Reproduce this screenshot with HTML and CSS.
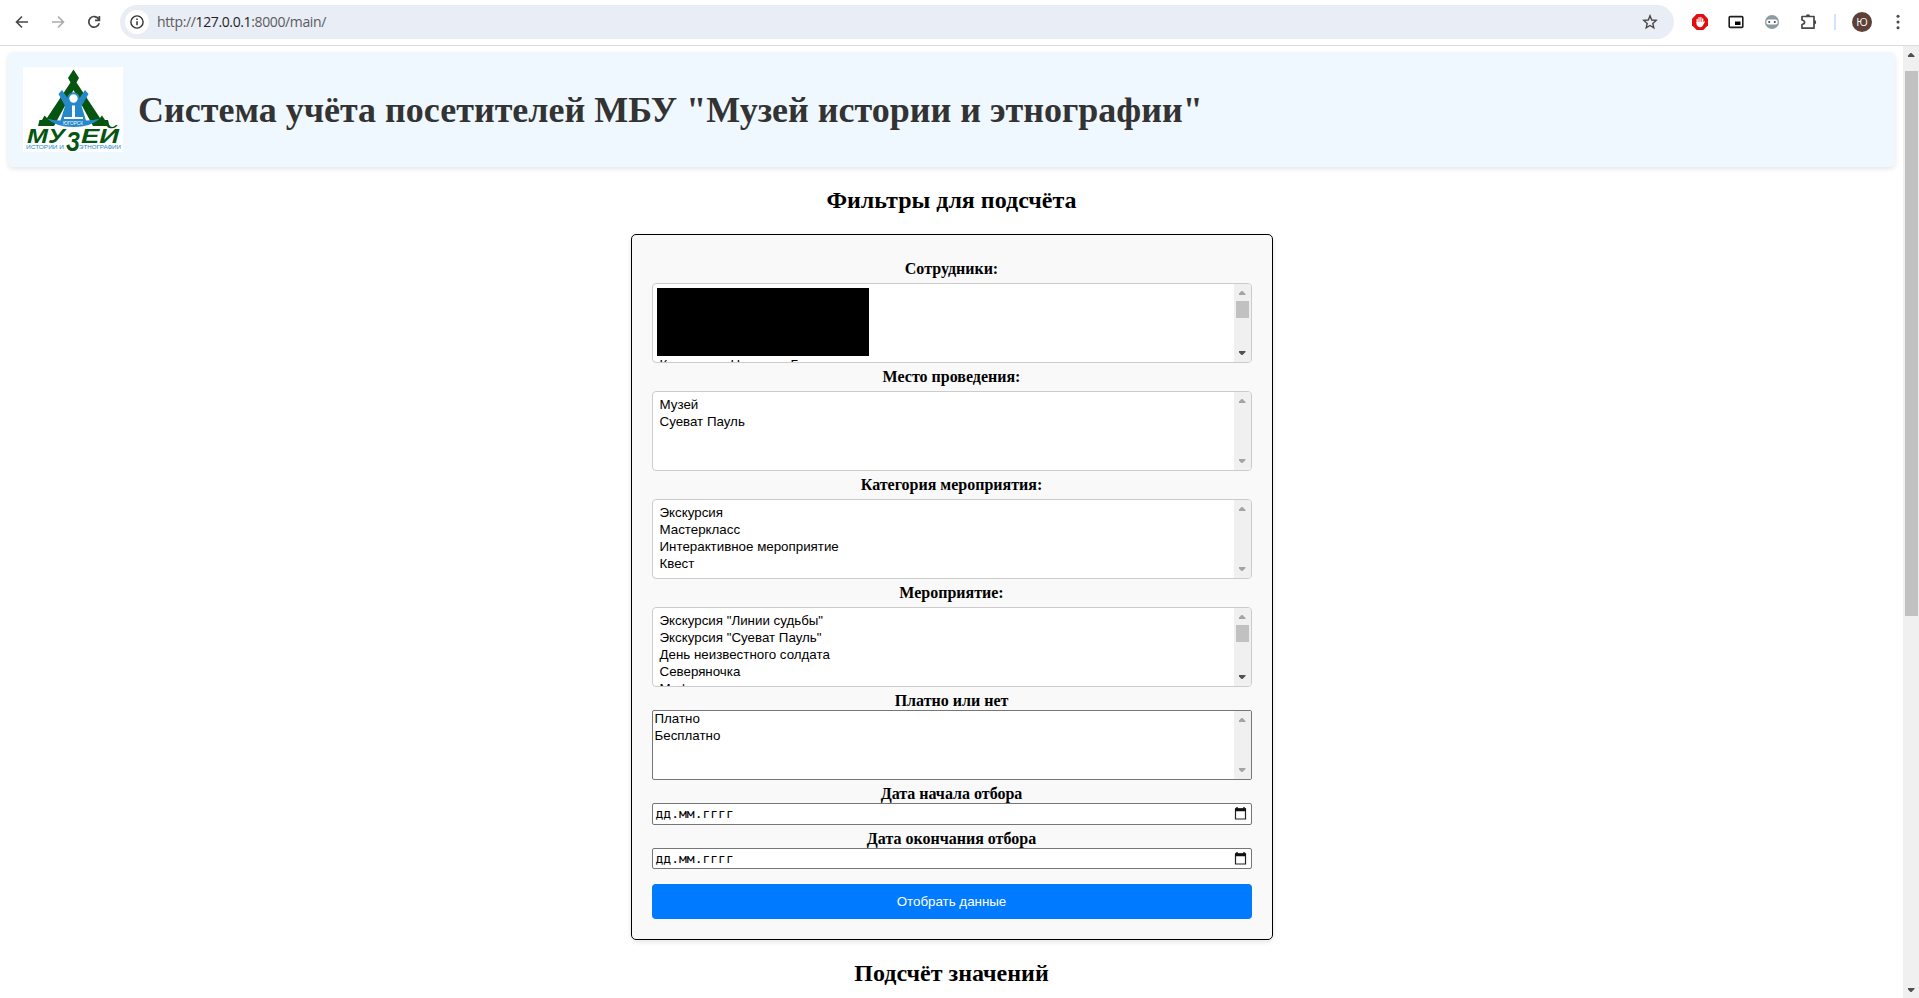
FILE: index.html
```html
<!DOCTYPE html>
<html lang="ru">
<head>
<meta charset="utf-8">
<title>Система учёта посетителей</title>
<link rel="stylesheet" href="styles.css">
</head>
<body>
<div class="toolbar">
  <svg class="nav-icon" viewBox="0 0 16 16"><path d="M14 8H3M8 2.5L2.5 8 8 13.500" fill="none" stroke="#474747" stroke-width="1.6"/></svg>
  <svg class="nav-icon" viewBox="0 0 16 16"><path d="M2 8h11M8 2.500L13.500 8 8 13.500" fill="none" stroke="#ababab" stroke-width="1.600"/></svg>
  <svg class="nav-icon" viewBox="0 0 16 16"><path d="M12.600 5A5.300 5.300 0 1 0 13.200 9.300M13.400 2v4.300H9" fill="none" stroke="#474747" stroke-width="1.700"/></svg>
  <div class="address">
    <span class="info"><svg width="14" height="14" viewBox="0 0 14 14"><circle cx="7" cy="7" r="6.100" fill="none" stroke="#333" stroke-width="1.400"/><path d="M7 6.200V10.300M7 3.500V5" stroke="#333" stroke-width="1.500"/></svg></span>
    <span class="url">http://<b>127.0.0.1</b>:8000/main/</span>
    <svg class="star" width="16" height="16" viewBox="0 0 16 16"><path d="M8 1.800L9.700 6l4.500.4-3.400 3 1 4.400L8 11.500l-3.800 2.300 1-4.400-3.400-3L6.300 6z" fill="none" stroke="#474747" stroke-width="1.400"/></svg>
  </div>
  <div class="extensions">
    <svg width="16" height="16" viewBox="0 0 16 16"><path d="M4.700 0h6.600L16 4.700v6.600L11.300 16H4.700L0 11.300V4.700z" fill="#e40d0d"/><path d="M5.200 9V5.500M7 8V3.700M8.900 8V3.500M10.700 9V5" stroke="#fff" stroke-width="1.300" stroke-linecap="round"/><path d="M4.500 8h6.800l1.300-.9q.6.500 0 1.300L10.600 12Q9.700 13.300 8 13.200 5.300 13 4.500 10.500z" fill="#fff"/></svg>
    <svg width="16" height="16" viewBox="0 0 16 16"><rect x="1.200" y="2.600" width="13.600" height="10.800" rx="1" fill="none" stroke="#1f1f1f" stroke-width="1.600"/><path d="M7 7.500h5.500V11H7z" fill="#000"/></svg>
    <svg width="16" height="16" viewBox="0 0 16 16"><circle cx="8" cy="8" r="7" fill="#8d9ca1"/><rect x="2.300" y="5.500" width="11.400" height="5" rx="2.500" fill="#fff"/><circle cx="5.200" cy="8" r="1" fill="#3c3c55"/><circle cx="10.800" cy="8" r="1" fill="#3c3c55"/></svg>
    <svg width="18" height="18" viewBox="0 0 18 18"><path d="M2 3.500h12v11.700H2v-3.700q2.600-.5 2.600-2.200T2 7z" fill="none" stroke="#474747" stroke-width="1.700" stroke-linejoin="round"/><path d="M5.800 3.500a2.200 2.200 0 0 1 4.400 0z M14 7a2.200 2.200 0 0 1 0 4.400z" fill="#474747"/></svg>
  </div>
  <span class="divider"></span>
  <span class="avatar">Ю</span>
  <svg class="dots" width="4" height="16" viewBox="0 0 4 16"><g fill="#474747"><circle cx="2" cy="2.300" r="1.500"/><circle cx="2" cy="8" r="1.500"/><circle cx="2" cy="13.700" r="1.500"/></g></svg>
</div>
<div class="viewport">
  <main class="page">
    <header class="banner">
      <svg class="logo" width="100" height="85" viewBox="0 0 100 85">
        <rect width="100" height="85" fill="#fff"/>
        <path d="M50.500 2.500L56 11l-2.500 4.500L77 51l2-2.500L82 53h3l1.500 6H70L50.500 23 31 59H15l1.500-6H19l2.500-4.500L24 51l23.500-35.500L45 11z" fill="#05540f"/>
        <path d="M35.500 27l3.500-4 7.500 11h8L62 23l3.500 4-7 12 4.500 14.500q8 0 14-2Q68 60 50.500 60T24 51.500q6 2 13.500 2L42 39z" fill="#2588c8"/>
        <circle cx="50.500" cy="31.500" r="5.200" fill="#fff" stroke="#2588c8" stroke-width="2"/>
        <path d="M49 38.500h3V50h8v2H41v-2h8z" fill="#fff"/>
        <text x="40" y="58" class="logo-small" textLength="20" lengthAdjust="spacingAndGlyphs" fill="#fff">ЮГОРСК</text>
        <text class="logo-word" x="4" y="76" textLength="38" lengthAdjust="spacingAndGlyphs">МУ</text>
        <text class="logo-z" x="43" y="83.500" textLength="14" lengthAdjust="spacingAndGlyphs">З</text>
        <text class="logo-word" x="58" y="76" textLength="38" lengthAdjust="spacingAndGlyphs">ЕЙ</text>
        <text class="logo-line" x="3" y="81.500" textLength="38" lengthAdjust="spacingAndGlyphs">ИСТОРИИ И</text>
        <text class="logo-line" x="56" y="81.500" textLength="42" lengthAdjust="spacingAndGlyphs">ЭТНОГРАФИИ</text>
      </svg>
      <h1>Система учёта посетителей МБУ "Музей истории и этнографии"</h1>
    </header>
    <h2>Фильтры для подсчёта</h2>
    <form class="filters">
      <label>Сотрудники:</label>
      <div class="list spaced">
        <div class="options"><div class="redacted"></div><p class="clipped"><span>К</span><span>Н</span><span>Г</span></p></div>
        <div class="scroll"><i class="up off"></i><i class="thumb"></i><i class="down"></i></div>
      </div>
      <label>Место проведения:</label>
      <div class="list spaced">
        <div class="options"><p>Музей</p><p>Суеват Пауль</p></div>
        <div class="scroll"><i class="up off"></i><i class="down off"></i></div>
      </div>
      <label>Категория мероприятия:</label>
      <div class="list spaced">
        <div class="options"><p>Экскурсия</p><p>Мастеркласс</p><p>Интерактивное мероприятие</p><p>Квест</p></div>
        <div class="scroll"><i class="up off"></i><i class="down off"></i></div>
      </div>
      <label>Мероприятие:</label>
      <div class="list spaced">
        <div class="options"><p>Экскурсия "Линии судьбы"</p><p>Экскурсия "Суеват Пауль"</p><p>День неизвестного солдата</p><p>Северяночка</p><p>Мифы</p></div>
        <div class="scroll"><i class="up off"></i><i class="thumb"></i><i class="down"></i></div>
      </div>
      <label>Платно или нет</label>
      <div class="list plain">
        <div class="options"><p>Платно</p><p>Бесплатно</p></div>
        <div class="scroll"><i class="up off"></i><i class="down off"></i></div>
      </div>
      <label>Дата начала отбора</label>
      <div class="date"><span>дд.мм.гггг</span><svg width="13" height="13" viewBox="0 0 13 13"><path d="M1.500 2h10v10H1.500z" fill="none" stroke="#222" stroke-width="1.200"/><path d="M1 1.300h11v3H1zM2.300 0h1.400v2H2.300zM9.300 0h1.400v2H9.300z" fill="#111"/></svg></div>
      <label>Дата окончания отбора</label>
      <div class="date second"><span>дд.мм.гггг</span><svg width="13" height="13" viewBox="0 0 13 13"><path d="M1.500 2h10v10H1.500z" fill="none" stroke="#222" stroke-width="1.200"/><path d="M1 1.300h11v3H1zM2.300 0h1.400v2H2.300zM9.300 0h1.400v2H9.300z" fill="#111"/></svg></div>
      <button type="button">Отобрать данные</button>
    </form>
    <h2>Подсчёт значений</h2>
  </main>
  <div class="scroll page-scroll"><i class="up"></i><i class="thumb"></i><i class="down"></i></div>
</div>
</body>
</html>
```
FILE: styles.css
```css
* { box-sizing: border-box; }
html, body { height: 100%; }
body {
  margin: 0;
  background: #fff;
  color: #000;
  font-family: "Liberation Serif", "Times New Roman", serif;
  overflow: hidden;
  display: flex;
  flex-direction: column;
}
svg { display: block; flex: none; }

/* browser toolbar */
.toolbar {
  flex: none;
  display: flex;
  align-items: center;
  height: 46px;
  padding: 0 4px 2px 14px;
  border-bottom: 1px solid #dcdcdc;
}
.nav-icon { width: 16px; height: 16px; margin-right: 20px; }
.nav-icon:nth-child(3) { margin-right: 18px; }
.address {
  display: flex;
  align-items: center;
  width: 1554px;
  height: 34px;
  padding: 0 16px 0 5px;
  border-radius: 17px;
  background: #e9edf6;
}
.info {
  display: grid;
  place-items: center;
  width: 24px;
  height: 24px;
  border-radius: 50%;
  background: #fff;
}
.url {
  flex: 1;
  margin-left: 8px;
  font: 14px "Open Sans", "Noto Sans", sans-serif;
  letter-spacing: -.37px;
  color: #5a5c60;
}
.url b { font-weight: 400; color: #1f1f1f; }
.extensions { display: flex; align-items: center; gap: 20px; margin-left: 18px; }
.divider { width: 2px; height: 16px; margin-left: 16px; background: #d3e3fd; }
.avatar {
  display: grid;
  place-items: center;
  width: 20px;
  height: 20px;
  margin-left: 16px;
  border-radius: 50%;
  background: #5d4037;
  color: #fff;
  font: 11px "Open Sans", sans-serif;
}
.dots { margin-left: 24px; }

/* page */
.viewport { flex: 1; min-height: 0; display: flex; }
.page { flex: 1; padding: 6px 8px 0; overflow: hidden; }
.banner {
  display: flex;
  align-items: center;
  height: 115px;
  padding: 15px;
  border-radius: 5px;
  background: #f0f8ff;
  box-shadow: 0 2px 5px rgba(0, 0, 0, .1);
}
h1 { margin: 2px 0 0 15px; font-size: 36px; line-height: 41px; color: #333; }
h2 { margin: 20px 0; font-size: 24px; line-height: 27px; text-align: center; }
.logo-small { font: 5px "Liberation Sans", sans-serif; }
.logo-word { font: italic bold 20px "Liberation Sans", sans-serif; fill: #05540f; }
.logo-z { font: italic bold 28px "Liberation Sans", sans-serif; fill: #05540f; }
.logo-line { font: 5.500px "Liberation Sans", sans-serif; fill: #2588c8; }

.filters {
  display: flex;
  flex-direction: column;
  width: 642px;
  height: 706px;
  margin: 0 auto;
  padding: 20px;
  border: 1px solid #000;
  border-radius: 5px;
  background: #f9f9f9;
  box-shadow: 0 2px 5px rgba(0, 0, 0, .1);
}
label { margin-top: 5px; font-size: 16px; font-weight: bold; line-height: 18px; text-align: center; }
.list { display: flex; flex: none; overflow: hidden; background: #fff; }
.spaced { height: 80px; margin-top: 5px; border: 1px solid #ccc; border-radius: 4px; }
.plain { height: 70px; border: 1px solid #767676; border-radius: 2px; }
.options { flex: 1; overflow: hidden; font: 13.333px/17px "Liberation Sans", Arial, sans-serif; }
.options p { margin: 0; padding-left: 2px; white-space: pre; }
.spaced .options { padding: 4px 0 0 5px; }
.plain .options p:first-child { margin-top: -1px; }
.options .clipped { display: flex; }
.clipped span { width: 71px; }
.clipped span + span { width: 60px; }
.redacted { width: 212px; height: 68px; margin-left: -1px; background: #000; }

.scroll {
  display: flex;
  flex-direction: column;
  align-items: center;
  width: 17px;
  padding: 7px 0;
  background: #f0f0f0;
}
.up, .down { flex: none; width: 7px; height: 4px; background: #505050; }
.up { clip-path: polygon(3px 0, 4px 0, 7px 3px, 7px 4px, 0 4px, 0 3px); }
.down { margin-top: auto; clip-path: polygon(0 0, 7px 0, 7px 1px, 4px 4px, 3px 4px, 0 1px); }
.off { background: #a3a3a3; }
.thumb { flex: none; width: 13px; height: 17px; margin-top: 6px; background: #c1c1c1; }
.page-scroll { width: 16px; padding: 7px 0 6px; }
.page-scroll .thumb { height: 545px; margin: 14px 0 0 1px; }

.date {
  display: flex;
  align-items: center;
  justify-content: space-between;
  flex: none;
  height: 22px;
  padding: 0 4px 1px 3px;
  border: 1px solid #767676;
  border-radius: 2px;
  background: #fff;
  font: 13px "DejaVu Sans Mono", monospace;
}
.second { height: 21px; padding-bottom: 0; }
button {
  flex: none;
  height: 35px;
  margin-top: 15px;
  border: 0;
  border-radius: 4px;
  background: #007bff;
  color: #fff;
  font: 13.333px "Liberation Sans", Arial, sans-serif;
}
```
